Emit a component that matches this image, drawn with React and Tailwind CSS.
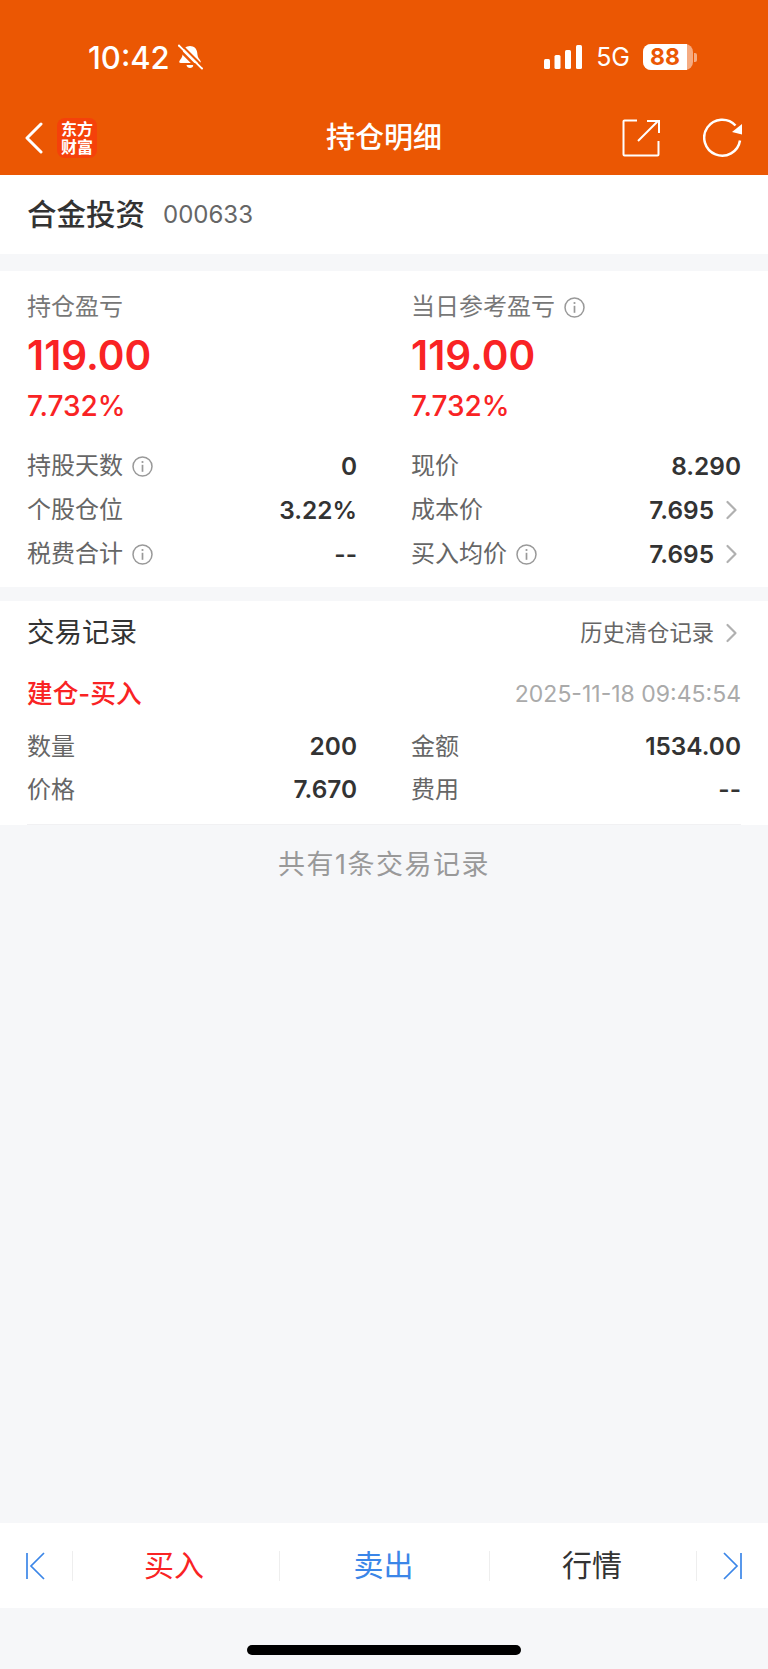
const FONT = 'font-["Inter","Noto_Sans_CJK_SC",sans-serif]'

function InfoIcon() {
  return (
    <svg width="21" height="21" viewBox="0 0 21 21" fill="none" className="shrink-0">
      <circle cx="10.5" cy="10.5" r="9.5" stroke="#999" strokeWidth="1.5" />
      <circle cx="10.5" cy="6" r="1.1" fill="#999" />
      <path d="M10.5 8.800v7" stroke="#999" strokeWidth="1.7" />
    </svg>
  )
}

function Chevron() {
  return (
    <svg width="27" height="24" viewBox="0 0 27 24" fill="none" className="shrink-0">
      <path d="M13.500 4l8 8-8 8" stroke="#b0b0b0" strokeWidth="2.200" strokeLinecap="round" strokeLinejoin="round" />
    </svg>
  )
}

function Row({ label, info, value, chevron, className = 'h-[44px]' }) {
  return (
    <div className={`flex items-center justify-between ${className}`}>
      <div className="flex items-center gap-[9px] text-[24px] text-[#666]">
        <span>{label}</span>
        {info && <InfoIcon />}
      </div>
      <div className="flex items-center text-[24.4px] font-semibold text-[#333]">
        <span>{value}</span>
        {chevron && <Chevron />}
      </div>
    </div>
  )
}

function Profit({ label, info }) {
  return (
    <div>
      <div className="flex h-[36px] items-center gap-[9px] text-[24px] text-[#777]">
        <span>{label}</span>
        {info && <InfoIcon />}
      </div>
      <div className="mt-[6px] flex h-[50px] items-center text-[40.5px] font-semibold text-[#f92324]">119.00</div>
      <div className="mt-[5px] flex h-[40px] items-center text-[28px] font-medium text-[#f92324]">7.732%</div>
    </div>
  )
}

function StatusBar() {
  return (
    <div className="flex h-[100px] items-center justify-between pt-[14px] pl-[88px] pr-[71px] text-white">
      <div className="flex items-center gap-[7px]">
        <span className="text-[31px] font-medium leading-none">10:42</span>
        <svg width="26" height="26" viewBox="0 0 26 26" fill="none">
          <path d="M13 2c-4 0-6.800 2.800-7.200 6.600-.3 3.400-.8 5.200-2.600 7.200-1.400 1.500-1.400 3.200.6 3.200h18.400c2 0 2-1.700.6-3.200-1.800-2-2.300-3.800-2.600-7.200C19.800 4.800 17 2 13 2z" fill="#fff" />
          <path d="M9.500 21h7c-.3 1.800-1.700 3-3.500 3s-3.200-1.200-3.500-3z" fill="#fff" />
          <path d="M0 3.500l22 22" stroke="#eb5703" strokeWidth="2.500" />
          <path d="M2 1.500l23 23" stroke="#fff" strokeWidth="2" strokeLinecap="round" />
          <path d="M4 .5l22 22" stroke="#eb5703" strokeWidth="2" />
        </svg>
      </div>
      <div className="flex items-center">
        <svg width="38" height="24" viewBox="0 0 38 24" fill="#fff">
          <rect x="0" y="14" width="6" height="10" rx="1.500" />
          <rect x="10.500" y="10" width="6" height="14" rx="1.500" />
          <rect x="21" y="5" width="6" height="19" rx="1.500" />
          <rect x="32" y="0" width="6" height="24" rx="1.500" />
        </svg>
        <span className="ml-[14px] text-[25px] leading-none">5G</span>
        <div className="ml-[13px] flex h-[26px] w-[50px] items-center rounded-[8px] bg-white/50">
          <div className="flex h-full w-[44px] items-center justify-center rounded-l-[8px] bg-white text-[23px] font-bold leading-none text-[#eb5703]">88</div>
        </div>
        <div className="ml-[1px] h-[9px] w-[3px] rounded-r-[2px] bg-white/50" />
      </div>
    </div>
  )
}

function NavBar() {
  return (
    <div className="grid h-[75px] grid-cols-[1fr_auto_1fr] items-center text-white">
      <div className="flex items-center pl-[24px]">
        <svg width="20" height="32" viewBox="0 0 20 32" fill="none">
          <path d="M17 2L3 16l14 14" stroke="#fff" strokeWidth="3" strokeLinecap="round" strokeLinejoin="round" />
        </svg>
        <div className="ml-[13px] flex h-[40px] w-[40px] flex-col items-center justify-center rounded-[8px] bg-[#f5410a] text-[16px] font-bold leading-[18px]">
          <span>东方</span>
          <span>财富</span>
        </div>
      </div>
      <div className="text-[29px] font-medium">持仓明细</div>
      <div className="flex items-center justify-end pr-[25px]">
        <svg width="38" height="38" viewBox="0 0 38 38" fill="none">
          <path d="M15 1.500H2.500a1 1 0 0 0-1 1v33a1 1 0 0 0 1 1h33a1 1 0 0 0 1-1V22" stroke="#fff" strokeWidth="2" />
          <path d="M16 22L36 2" stroke="#fff" strokeWidth="2" />
          <path d="M25 2h12v12" stroke="#fff" strokeWidth="2" />
        </svg>
        <svg width="40" height="40" viewBox="0 0 40 40" fill="none" className="ml-[43px]">
          <path d="M37 22.500A18 18 0 1 1 32.500 7.500" stroke="#fff" strokeWidth="2.500" />
          <path d="M39 6v10.500L29 14z" fill="#fff" />
        </svg>
      </div>
    </div>
  )
}

function Footer() {
  const Divider = () => <div className="h-[30px] w-px bg-[#eee]" />
  return (
    <div className="flex h-[85px] items-center bg-white text-[30px]">
      <div className="flex w-[72px] justify-center pr-[3px]">
        <svg width="20" height="28" viewBox="0 0 20 28" fill="none" stroke="#3b86e8" strokeWidth="1.700">
          <path d="M2 1v26" />
          <path d="M19 1L6 14l13 13" />
        </svg>
      </div>
      <Divider />
      <div className="w-[206px] pr-[4px] text-center text-[#f92324]">买入</div>
      <Divider />
      <div className="w-[209px] pr-[2px] text-center text-[#3b86e8]">卖出</div>
      <Divider />
      <div className="w-[206px] pr-[2px] text-center text-[#333]">行情</div>
      <Divider />
      <div className="flex w-[71px] justify-center">
        <svg width="20" height="28" viewBox="0 0 20 28" fill="none" stroke="#3b86e8" strokeWidth="1.700">
          <path d="M18 1v26" />
          <path d="M1 1l13 13L1 27" />
        </svg>
      </div>
    </div>
  )
}

export default function App() {
  return (
    <div className={`flex h-[1669px] w-[768px] flex-col bg-[#f6f7f9] ${FONT}`}>
      <div className="bg-[#eb5703]">
        <StatusBar />
        <NavBar />
      </div>

      <div className="flex h-[79px] items-center bg-white px-[27px]">
        <span className="text-[29.500px] font-medium text-[#333]">合金投资</span>
        <span className="ml-[18px] text-[24px] text-[#666]">000633</span>
      </div>

      <div className="mt-[17px] bg-white px-[27px] pt-[18px] pb-[11px]">
        <div className="grid grid-cols-2 gap-x-[54px]">
          <Profit label="持仓盈亏" />
          <Profit label="当日参考盈亏" info />
        </div>
        <div className="mt-[18px] grid grid-cols-2 gap-x-[54px]">
          <Row label="持股天数" info value="0" />
          <Row label="现价" value="8.290" />
          <Row label="个股仓位" value="3.22%" />
          <Row label="成本价" value="7.695" chevron />
          <Row label="税费合计" info value="--" />
          <Row label="买入均价" info value="7.695" chevron />
        </div>
      </div>

      <div className="mt-[14px] bg-white px-[27px]">
        <div className="flex h-[64px] items-center justify-between">
          <span className="text-[27.500px] text-[#333]">交易记录</span>
          <div className="flex items-center text-[22.300px] text-[#666]">
            <span>历史清仓记录</span>
            <Chevron />
          </div>
        </div>
        <div className="mt-[7px] flex h-[44px] items-center justify-between">
          <span className="text-[25.700px] font-medium text-[#f92324]">建仓-买入</span>
          <span className="text-[23px] text-[#aaa]">2025-11-18 09:45:54</span>
        </div>
        <div className="mt-[9px] grid grid-cols-2 gap-x-[54px] border-b border-[#f1f1f3] pb-[13px]">
          <Row label="数量" value="200" className="h-[43px]" />
          <Row label="金额" value="1534.00" className="h-[43px]" />
          <Row label="价格" value="7.670" className="h-[43px]" />
          <Row label="费用" value="--" className="h-[43px]" />
        </div>
      </div>

      <div className="flex-1 pt-[20px] text-center text-[27px] tracking-[1.5px] text-[#999]">共有1条交易记录</div>

      <Footer />
      <div className="flex h-[61px] justify-center pt-[37px]">
        <div className="h-[10px] w-[274px] rounded-full bg-black" />
      </div>
    </div>
  )
}
